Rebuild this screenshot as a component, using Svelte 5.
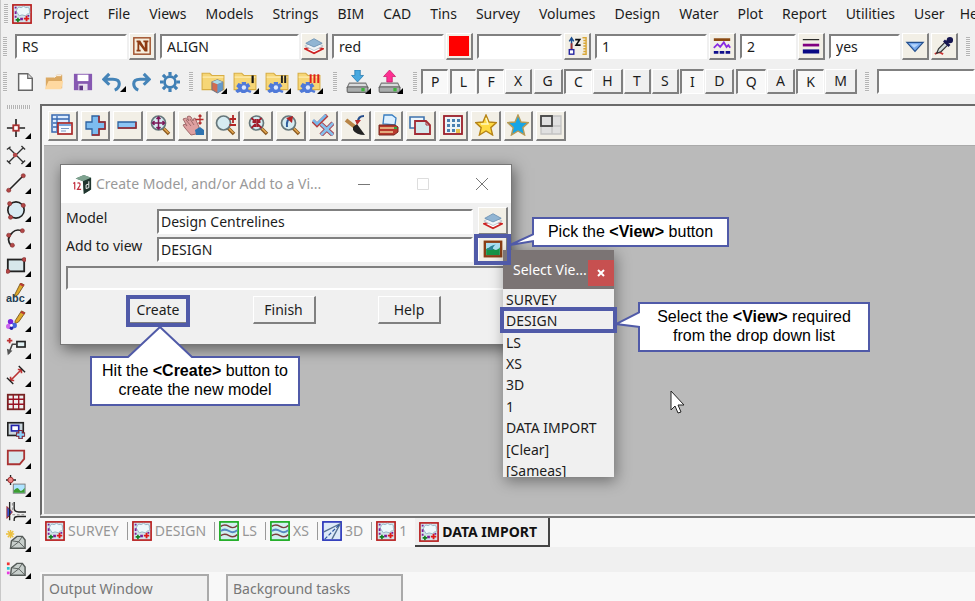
<script lang="ts">
type Tool = { name: string; icon: string; menu?: boolean }

const menus = [
	"Project", "File", "Views", "Models", "Strings", "BIM", "CAD", "Tins", "Survey",
	"Volumes", "Design", "Water", "Plot", "Report", "Utilities", "User", "He",
]

const fields = [
	{ name: "Name", value: "RS", width: 112, icon: "name" },
	{ name: "Model", value: "ALIGN", width: 139, icon: "layers" },
	{ name: "Colour", value: "red", width: 112, icon: "colour" },
	{ name: "Height", value: "", width: 85, icon: "height" },
	{ name: "Linestyle", value: "1", width: 112, icon: "linestyle" },
	{ name: "Weight", value: "2", width: 56, icon: "weight" },
	{ name: "Tinable", value: "yes", width: 71, icon: "triangle" },
]

const fileTools: Tool[] = [
	{ name: "New", icon: "page" },
	{ name: "Open", icon: "open" },
	{ name: "Save", icon: "save" },
	{ name: "Undo", icon: "undo", menu: true },
	{ name: "Redo", icon: "redo" },
	{ name: "Settings", icon: "gear" },
]
const folderTools: Tool[] = [
	{ name: "Project folder", icon: "folderCube", menu: true },
	{ name: "Folder one", icon: "folder1", menu: true },
	{ name: "Folder two", icon: "folder2", menu: true },
	{ name: "Folder three", icon: "folder3", menu: true },
]
const driveTools: Tool[] = [
	{ name: "Read", icon: "driveIn", menu: true },
	{ name: "Write", icon: "driveOut", menu: true },
]

const snaps = "PLFXGCHTSIDQAKM".split("")
const snapsOn = ["P", "L", "F", "C", "I", "Q", "K"]

const cadTools = [
	"point", "cross", "line", "circle", "arc", "rect", "text", "paint", "leader",
	"dimension", "grid", "copy", "polygon", "image", "road", "tinNew", "tin",
]

const viewTools = [
	"viewMenu", "plus", "minus", "fit", "pan", "zoomPm", "shrink", "previous",
	"toggle", "brush", "print", "windows", "keypad", "star", "starBlue", "layout",
]

const tabs = [
	{ name: "SURVEY", icon: "plan" },
	{ name: "DESIGN", icon: "plan" },
	{ name: "LS", icon: "section" },
	{ name: "XS", icon: "section" },
	{ name: "3D", icon: "persp" },
	{ name: "1", icon: "plan" },
	{ name: "DATA IMPORT", icon: "plan" },
]
let activeTab = $state("DATA IMPORT")

const views = ["SURVEY", "DESIGN", "LS", "XS", "3D", "1", "DATA IMPORT", "[Clear]", "[Sameas]"]
let model = $state("Design Centrelines")
let view = $state("DESIGN")
let message = $state("")

const folder = `<path d="M1 3h7l2 2h11v13H1z" fill="#f6d676" stroke="#d8ae45"/><path d="M1.500 6.500h19" stroke="#fff0b8"/>`
const cog = `<path d="M8 11h4v2l2-1 2 3-2 1v2l3 1-1 2-3-1-2 1H8l-1-1-3 1-2-2 3-2-2-2 2-3 3 1z" fill="#4f79d8"/><circle cx="10" cy="16" r="2" fill="#dfe8fb"/>`
const drive = `<path d="M4 12h15l2 4H2z" fill="#d9dbdc" stroke="#777"/><rect x="2" y="15.500" width="19" height="5" rx="1" fill="#a9acac" stroke="#666"/><rect x="15" y="16.500" width="3" height="3" fill="#3db53d"/>`
const lens = `<path d="M14 14l6 6" stroke="#8a5a20" stroke-width="3.500"/><path d="M14.500 14l5 5" stroke="#e5a850" stroke-width="1.500"/><circle cx="9.500" cy="9" r="7" fill="#d6ecf2" stroke="#66777b" stroke-width="1.700"/>`
const starPath = `M11 1l3 7 7.500.6-5.700 5 1.800 7.400L11 17l-6.600 4 1.800-7.400-5.700-5L8 8z`
const dot = (x: number, y: number) => `<circle cx="${x}" cy="${y}" r="2.300" fill="#b34747" stroke="#7c2828" stroke-width=".6"/>`
const mesh = `<path d="M5 20l1-8 6-5h6l3 4v9z" fill="#c8cfcc" stroke="#555b58" stroke-width="1.600"/><path d="M5 20l9-7 7 7M14 13l4-6M14 13l-7-1" fill="none" stroke="#555b58"/>`

// every icon is drawn on a 22 x 22 grid
const icons: Record<string, string> = {
	plan: `<rect x="1" y="1" width="20" height="20" fill="#d3e3ea" stroke="#b81c1c" stroke-width="1.800"/><path d="M6 5q1-3 4-1 3-3 5 0 5-1 4 3 2 4-2 4l-2 2-4-1-3 1-2-3q-3-2 0-5z" fill="#edf8fb" stroke="#8fb2c2"/><path d="M3 3h2v2H3zM3 8h2v3H3zM3 13h2v2H3zM9 15h3v3H9zM17 12h2v2h-2z" fill="#7a1e9a"/><path d="M6.500 15v5M4 17.500h5" stroke="#128020" stroke-width="1.800"/><path d="M16 13v6M13 16h6" stroke="#e01818" stroke-width="2"/>`,
	section: `<rect x="1" y="1" width="20" height="20" fill="#d2eff0" stroke="#12a818" stroke-width="1.800"/><path d="M2 6q4-3 9 0t9-1" fill="none" stroke="#7b3e3e" stroke-width="1.600"/><path d="M2 11q4-3 9 0t9-1" fill="none" stroke="#5789c2" stroke-width="2.200"/><path d="M2 16q4-3 9 0t9-1" fill="none" stroke="#7b3e3e" stroke-width="1.600"/>`,
	persp: `<rect x="1" y="1" width="20" height="20" fill="#dce9f8" stroke="#2430b8" stroke-width="1.800"/><path d="M2 12L20 3 11 20" fill="none" stroke="#55708f" stroke-width="1.500"/><path d="M3 20L20 3" stroke="#2b56a0" stroke-width="1.300" stroke-dasharray="4 2"/>`,
	name: `<rect x="2" y="2" width="18" height="18" fill="#f6eedc" stroke="#a0522d" stroke-width="1.600"/><path d="M5 5h4l5 8V7h-1.500V5H18v2h-1v10h-3L8 9v6h1.500v2H5v-2h1V7H5z" fill="#8e3b12"/>`,
	layers: `<path d="M1 14l10 5 10-5-10-3z" fill="#fff" stroke="#c22" stroke-width="1.800"/><path d="M1 11l10 5 10-5-10-5z" fill="#f2f5f7" stroke="#b4c2cc"/><path d="M2 8l9 4 9-4-9-5z" fill="#91b5d3" stroke="#6f94b5"/>`,
	colour: `<rect x="0" y="0" width="22" height="22" fill="#f00"/>`,
	height: `<path d="M5 17V3M2.500 6L5 2l2.500 4" fill="none" stroke="#194d8f" stroke-width="1.600"/><path d="M5 8v8" stroke="#a33030" stroke-width="2"/><rect x="2.500" y="15" width="5" height="5" fill="#fff" stroke="#2222a0" stroke-width="1.500"/><path d="M9 4h5l-4 6h5" fill="none" stroke="#111" stroke-width="1.800"/><path d="M17 2h4v18h-4M18 5h3M18 8h3M18 11h3M18 14h3M18 17h3" fill="none" stroke="#d8a736" stroke-width="1.600"/>`,
	linestyle: `<path d="M2 4h18" stroke="#8b4a12" stroke-width="3"/><path d="M2 13l4-4 3 3 4-5 3 5 2-2 2 3" fill="none" stroke="#8a2be2" stroke-width="2"/><path d="M2 18h18" stroke="#10108c" stroke-width="3" stroke-dasharray="5 1.500"/>`,
	weight: `<path d="M2 4h18" stroke="#222" stroke-width="1.300"/><path d="M2 10h18" stroke="#800080" stroke-width="3"/><path d="M2 17h18" stroke="#0a0a84" stroke-width="4.500"/>`,
	triangle: `<path d="M2 7h18l-9 10z" fill="#77a9ed" stroke="#24508e" stroke-width="1.300"/><path d="M6 9h9l-5 4z" fill="#b8d7fb"/>`,
	dropper: `<path d="M1 20q4-4 9 0" fill="none" stroke="#c33" stroke-width="2"/><path d="M3 19l2-5 7-7 3 3-7 7z" fill="#d2dcdc" stroke="#333" stroke-width="1.300"/><path d="M11 5l6 6M14 7l3-4" stroke="#161650" stroke-width="3"/><circle cx="17.500" cy="4.500" r="3.500" fill="#161650"/>`,
	page: `<path d="M4 2h10l5 5v13H4z" fill="#fff" stroke="#666" stroke-width="1.600"/><path d="M14 2v5h5" fill="#ddd" stroke="#666" stroke-width="1.300"/>`,
	open: `<path d="M2 18V6h9l3-3h6v15z" fill="#dba963"/><path d="M1 19l4-9h16l-2 9z" fill="#ffd9a0"/><path d="M11 6l3-2h5" stroke="#fff" fill="none"/>`,
	save: `<path d="M1 2h20v18H1z" fill="#8658b1"/><rect x="5" y="3" width="12" height="7" fill="#fff"/><rect x="6" y="13" width="10" height="7" fill="#e8e0ee"/><rect x="7" y="15" width="4" height="5" fill="#5e3685"/>`,
	undo: `<path d="M8 2L2 8l6 6M2 8h10q7 0 7 5 0 5-5 7" fill="none" stroke="#4584b8" stroke-width="3.400"/>`,
	redo: `<path d="M14 2l6 6-6 6M20 8H10q-7 0-7 5 0 5 5 7" fill="none" stroke="#4584b8" stroke-width="3.400"/>`,
	gear: `<circle cx="11" cy="11" r="6" fill="none" stroke="#3f7fb5" stroke-width="3"/><path d="M11 0v4M11 18v4M0 11h4M18 11h4M3.200 3.200L6 6M16 16l2.800 2.800M18.800 3.200L16 6M6 16l-2.800 2.800" stroke="#3f7fb5" stroke-width="3.500"/>`,
	folderCube: `${folder}<path d="M10 11l5-2 5 2v7l-5 3-5-3z" fill="#d26b50" stroke="#77777f"/><path d="M10 11l5 2 5-2-5-2z" fill="#aadbea"/><path d="M15 13l5-2v7l-5 3z" fill="#6299cb"/>`,
	folder1: `${folder}${cog}<path d="M18 5v7" stroke="#111" stroke-width="2"/>`,
	folder2: `${folder}${cog}<path d="M15.500 5v7M18.500 5v7" stroke="#222" stroke-width="1.800"/>`,
	folder3: `${folder}${cog}<path d="M12.500 4v8M16 4v8M19.500 4v8" stroke="#e12020" stroke-width="1.800"/>`,
	driveIn: `${drive}<path d="M9 0h5v5h3l-5.500 6L6 5h3z" fill="#48a9e0" stroke="#2377ad" stroke-width=".7"/>`,
	driveOut: `${drive}<path d="M9 11h5V6h3l-5.500-6L6 6h3z" fill="#ff2f92" stroke="#c61b6a" stroke-width=".7"/>`,
	point: `<path d="M11 1v20M1 11h20" stroke="#222" stroke-width="1.800"/><rect x="8" y="8" width="6" height="6" fill="#fff" stroke="#a33" stroke-width="2"/>`,
	cross: `<path d="M3 3l16 16M19 3L3 19M1 5l4-3M17 1l4 4M1 17l4 4M17 21l4-4" stroke="#333" stroke-width="1.500"/><circle cx="10" cy="11" r="2.500" fill="#b34747"/>`,
	line: `<path d="M3 19L19 3" stroke="#222" stroke-width="1.800"/>${dot(3, 19)}${dot(19, 3)}`,
	circle: `<circle cx="11" cy="11" r="9" fill="#d9eaf2" stroke="#222" stroke-width="1.800"/>${dot(4, 4)}${dot(19, 6)}${dot(5, 19)}`,
	arc: `<path d="M6 20Q-1 12 7 5q5-5 12-1" fill="none" stroke="#222" stroke-width="1.800"/>${dot(3, 8)}${dot(18, 3)}${dot(7, 19)}`,
	rect: `<rect x="2" y="5" width="18" height="13" fill="#d7e7eb" stroke="#222" stroke-width="2"/>${dot(20, 5)}${dot(2, 18)}`,
	text: `<path d="M10 12L16 0l4 2-7 11-4 2z" fill="#dfaa2b" stroke="#79571b"/><path d="M16 0l4 2-1 2-4-2z" fill="#b73939"/><text x="0" y="21" font-family="Liberation Sans" font-size="12" font-weight="bold" fill="#243f55">abc</text>`,
	paint: `<path d="M10 12L17 1l4 2-7 10-4 2z" fill="#dfaa2b" stroke="#79571b"/><path d="M17 1l4 2-1 2-4-2z" fill="#b73939"/><circle cx="5" cy="13" r="3" fill="#72d"/><circle cx="9" cy="17" r="3" fill="#46d"/><circle cx="3" cy="18" r="3" fill="#c6e"/><circle cx="6" cy="20" r="2" fill="#22a"/><circle cx="6" cy="17" r="1.500" fill="#fff"/>`,
	leader: `<path d="M4 1v6M1 4h6" stroke="#b33" stroke-width="2"/><rect x="12" y="5" width="9" height="6" fill="#e1f1f4" stroke="#222" stroke-width="1.800"/><path d="M12 8H7L3 18" fill="none" stroke="#444" stroke-width="1.600"/><path d="M1 13l1 7 5-5z" fill="#555"/>`,
	dimension: `<path d="M5 17L17 5M5 13v4h4M13 5h4v4" fill="none" stroke="#b33" stroke-width="1.800"/><path d="M1 14l7 7M14 1l7 7" stroke="#222" stroke-width="1.500"/>`,
	grid: `<rect x="2" y="3" width="18" height="16" fill="#eee" stroke="#722" stroke-width="2"/><path d="M2 8h18M2 13.500h18M8 3v16M14 3v16" stroke="#912" stroke-width="1.500"/>`,
	copy: `<rect x="2" y="3" width="17" height="14" fill="#cbd6dc" stroke="#222" stroke-width="1.800"/><rect x="6" y="6" width="8" height="6" fill="#fff" stroke="#22a" stroke-width="1.800"/><path d="M16 11v10M11 16h10" stroke="#7d2332" stroke-width="5"/><path d="M16 12v8M12 16h8" stroke="#8bd3ff" stroke-width="2.500"/>`,
	polygon: `<path d="M2 4h18v9l-5 6H2z" fill="#d8e9ec" stroke="#a33" stroke-width="2"/>`,
	image: `<path d="M5 0v11M0 5.500h11" stroke="#222" stroke-width="1.500"/><circle cx="5" cy="5.500" r="3" fill="#e88" stroke="#922"/><rect x="8" y="10" width="13" height="10" fill="#aee4ff" stroke="#777"/><path d="M8.500 17q4-5 6-1t6-2v5.500h-12z" fill="#3e9d31"/>`,
	road: `<path d="M1 5l6 6-6 7z" fill="#3158dc" stroke="#a22"/><path d="M4 0v20M9 0v7q0 4 5 4h8M9 21v-2q0-3 4-3h9" fill="none" stroke="#222" stroke-width="1.500"/><path d="M7 14h15M7 1v8" stroke="#888" stroke-dasharray="3 2"/>`,
	tinNew: `${mesh}<path d="M5 0v9M0 4.500h9M2 1l6 7M8 1L2 8" stroke="#ebc03f" stroke-width="1.600"/>`,
	tin: `${mesh}<path d="M1 6h3v3H1z" fill="#e33"/><path d="M1 11h3v3H1z" fill="#26c6d0"/><path d="M1 16h3v3H1z" fill="#e83be0"/>`,
	viewMenu: `<rect x="1" y="1" width="17" height="17" fill="#dcecff" stroke="#3768b0" stroke-width="1.500"/><path d="M1 5h17M6 2v15M2 9h7M2 13h6" stroke="#3768b0" stroke-width="1.300"/><rect x="7" y="9" width="14" height="11" fill="#f6fbff" stroke="#a82828" stroke-width="1.700"/><path d="M8 11h12" stroke="#7aa7dc" stroke-width="2"/><path d="M10 14.500h8M10 17h5" stroke="#7a99c5"/>`,
	plus: `<path d="M8 2h7v6h6v7h-6v6H8v-6H2V8h6z" fill="#7dbcf0" stroke="#2d62a0" stroke-width="1.300"/><path d="M15 2v6h6v7h-6v6H8" fill="none" stroke="#a42828" stroke-width="1.500"/>`,
	minus: `<path d="M2 8h18v6H2z" fill="#8cc5f4" stroke="#2d62a0" stroke-width="1.300"/><path d="M20 8v6H2" fill="none" stroke="#a42828" stroke-width="1.500"/>`,
	fit: `${lens}<path d="M9.500 3v12M3.500 9h12M7.500 5l2-2 2 2M7.500 13l2 2 2-2M5.500 7l-2 2 2 2M13.500 7l2 2-2 2" fill="none" stroke="#7c1758" stroke-width="1.500"/>`,
	pan: `<path d="M1 5q3-2 5 1l1 1-2-4q2-2 4 0l2 4q0-3 2-3l4 9-3 7-5 1-6-7-2-3q2-2 4 1z" fill="#dfa0a0" stroke="#a06a6a"/><path d="M4 6l5 6M8 5l4 6" stroke="#a06a6a"/><path d="M13 16l5-3 4 3v5h-8z" fill="#2f73af"/><path d="M18 1v9M13.500 5.500h8M16.500 2.500L18 1l1.500 1.500M16.500 8.500L18 10l1.500-1.500" fill="none" stroke="#b32e2e" stroke-width="1.300"/>`,
	zoomPm: `${lens}<path d="M19 1v8M15.500 5h6.500M15.500 11H22" stroke="#b22424" stroke-width="1.800"/>`,
	shrink: `${lens}<path d="M4.500 4l4 4V5M8.500 8h-3M14.500 4l-4 4V5M10.500 8h3M4.500 14l4-4v3M14.500 14l-4-4v3" fill="none" stroke="#a11c2b" stroke-width="1.800"/>`,
	previous: `${lens}<path d="M13 3q-6 2-5 10" fill="none" stroke="#2e5e9d" stroke-width="2"/><path d="M7 4l7-2-1 7z" fill="#b42323"/>`,
	toggle: `<path d="M1 7l4 4L15 1" fill="none" stroke="#b43c3c" stroke-width="4"/><path d="M1 6l4 4L14 1" fill="none" stroke="#78b6e8" stroke-width="2.500"/><path d="M9 10l12 11M21 9L9 21" stroke="#a83c4c" stroke-width="4.500"/><path d="M9 10l12 11M21 9L9 21" stroke="#86c0ec" stroke-width="2.800"/>`,
	brush: `<path d="M2 6l9 7" stroke="#b88547" stroke-width="4"/><path d="M9 13l4-3 8 11q-9 0-12-5z" fill="#222"/><path d="M20 2q-6 0-6 6" fill="none" stroke="#284f8b" stroke-width="2.200"/><path d="M11 6h6l-4 5z" fill="#b52b2b"/>`,
	print: `<path d="M6 10L7 1h8l4 3-1 7z" fill="#dcf0ff" stroke="#377cc0" stroke-width="1.300"/><path d="M2 11h16l3 2v5l-4 3H2z" fill="#b8392c" stroke="#76271f"/><path d="M3 14h15M3 18h13" stroke="#f0d097" stroke-width="1.500"/><path d="M17 14h3" stroke="#35a83e" stroke-width="2"/>`,
	windows: `<path d="M1 3h14v11H1z" fill="#edf7fc" stroke="#3f73ad" stroke-width="1.600"/><path d="M6 7h11l4 4v9H6z" fill="#d5e8ec" stroke="#a22b35" stroke-width="1.800"/><path d="M17 7v4h4" fill="none" stroke="#a22b35"/>`,
	keypad: `<rect x="2" y="2" width="18" height="18" fill="#eef4f6" stroke="#9b1d28" stroke-width="1.800"/><path d="M5 5h3v3H5zM10 5h3v3h-3zM15 5h3v3h-3zM5 10h3v3H5zM10 10h3v3h-3zM15 10h3v3h-3zM5 15h3v3H5zM10 15h3v3h-3z" fill="#4b80af"/><rect x="14" y="15" width="4" height="4" fill="#e7c14c"/>`,
	star: `<path d="${starPath}" fill="#ffda42" stroke="#b68316" stroke-width="1.400"/><path d="M11 4l2 6-7 0" fill="none" stroke="#fff7bd" stroke-width="1.500"/>`,
	starBlue: `<path d="${starPath}" fill="#16a5e5" stroke="#b79a54" stroke-width="1.400"/>`,
	layout: `<path d="M1 2h20v18H1zM12 2v18M1 12h20" fill="#e0e0e0" stroke="#c2c2c2" stroke-width="1.300"/><rect x="1" y="2" width="11" height="10" fill="#e0e0e0" stroke="#444" stroke-width="1.800"/>`,
	picture: `<rect x="2" y="3" width="18" height="16" fill="#a9dff2" stroke="#8a3d15" stroke-width="2.600"/><path d="M3.500 11q4-3 8 0t7-2v8.500h-15z" fill="#159447"/><path d="M4 12q4-5 10-6-4 3-3 6z" fill="#2c8295"/>`,
	app: `<path d="M4 5l9-4 8 3v13l-8 5-1-14z" fill="#527767"/><path d="M4 5l9-4 8 3-8 4z" fill="#7fa390"/><path d="M12 8l9-4v13l-8 5z" fill="#20352e"/><path d="M3 9v8M1.500 10.500L3 9M6 10q4-1 2.500 3L6 17h4" fill="none" stroke="#c22e3e" stroke-width="1.300"/><path d="M18.500 8v7l-3 1v-4l3-1" fill="none" stroke="#fff"/>`,
}
</script>

{#snippet glyph(name: string)}
	<svg class="glyph" viewBox="0 0 22 22" aria-hidden="true">{@html icons[name]}</svg>
{/snippet}

{#snippet flat(tool: Tool)}
	<button class="flat" class:menu={tool.menu} aria-label={tool.name}>
		{@render glyph(tool.icon)}
	</button>
{/snippet}

<div class="app">
	<nav class="menubar">
		<span class="grip"></span>
		<span class="logo">{@render glyph("plan")}</span>
		{#each menus as menu}
			<button class="menu-item">{menu}</button>
		{/each}
	</nav>

	<div class="bar">
		<span class="grip"></span>
		{#each fields as field}
			<div class="field">
				<input class="sunken" aria-label={field.name} value={field.value} style="width: {field.width}px" />
				<button class="raised" aria-label="Pick {field.name}">{@render glyph(field.icon)}</button>
				{#if field.name === "Tinable"}
					<button class="raised" aria-label="Same as">{@render glyph("dropper")}</button>
				{/if}
			</div>
		{/each}
		<span class="grip last"></span>
	</div>

	<div class="bar tools">
		<span class="grip"></span>
		<div class="group files">
			{#each fileTools as tool}{@render flat(tool)}{/each}
		</div>
		<span class="grip"></span>
		<div class="group wide">
			{#each folderTools as tool}{@render flat(tool)}{/each}
		</div>
		<span class="grip"></span>
		<div class="group wide">
			{#each driveTools as tool}{@render flat(tool)}{/each}
		</div>
		<span class="grip"></span>
		<div class="snaps">
			{#each snaps as snap}
				<button class="snap" class:on={snapsOn.includes(snap)}>{snap}</button>
			{/each}
		</div>
		<span class="grip"></span>
		<input class="sunken command" aria-label="Command" />
	</div>

	<div class="work">
		<aside class="sidebar">
			<span class="grip across"></span>
			{#each cadTools as tool}
				<button class="flat menu" aria-label={tool}>{@render glyph(tool)}</button>
			{/each}
		</aside>

		<main>
			<section class="frame">
				<div class="view-tools">
					{#each viewTools as tool}
						<button class="raised" aria-label={tool}>{@render glyph(tool)}</button>
					{/each}
				</div>

				<div class="canvas">
					<form class="dialog" onsubmit={e => e.preventDefault()}>
						<header>
							<span class="app-icon">{@render glyph("app")}</span>
							<h1>Create Model, and/or Add to a Vi...</h1>
							<button type="button" aria-label="Minimise">
								<svg viewBox="0 0 12 12"><path d="M0 6.500h12" /></svg>
							</button>
							<button type="button" aria-label="Maximise" disabled>
								<svg viewBox="0 0 12 12"><path d="M.5.5h11v11H.5z" /></svg>
							</button>
							<button type="button" aria-label="Close">
								<svg viewBox="0 0 12 12"><path d="M0 0l12 12M12 0L0 12" /></svg>
							</button>
						</header>
						<div class="row">
							<label for="model">Model</label>
							<input id="model" class="sunken" bind:value={model} />
							<button type="button" class="raised" aria-label="Pick model">{@render glyph("layers")}</button>
						</div>
						<div class="row">
							<label for="view">Add to view</label>
							<input id="view" class="sunken" bind:value={view} />
							<button type="button" class="raised" aria-label="Pick view">{@render glyph("picture")}</button>
						</div>
						<input class="message" aria-label="Message" readonly bind:value={message} />
						<footer>
							<button type="submit">Create</button>
							<button type="button">Finish</button>
							<button type="button">Help</button>
						</footer>
					</form>

					<div class="popup">
						<header>
							<h2>Select Vie...</h2>
							<button aria-label="Close list">
								<svg viewBox="0 0 8 8"><path d="M1 1l6 6M7 1L1 7" /></svg>
							</button>
						</header>
						<ul>
							{#each views as name}
								<li><button onclick={() => (view = name)}>{name}</button></li>
							{/each}
						</ul>
					</div>

					<span class="mark mark-create"></span>
					<span class="mark mark-view"></span>
					<span class="mark mark-design"></span>

					<div class="callout pick">
						<svg viewBox="0 0 25 16"><path d="M25 3L1 14l24-4" /></svg>
						<p>Pick the <b>&lt;View&gt;</b> button</p>
					</div>
					<div class="callout select">
						<svg viewBox="0 0 25 18"><path d="M25 1L1 13l24 3" /></svg>
						<p>Select the <b>&lt;View&gt;</b> required<br />from the drop down list</p>
					</div>
					<div class="callout create">
						<svg viewBox="0 0 68 32"><path d="M1 32L34 1l33 31" /></svg>
						<p>Hit the <b>&lt;Create&gt;</b> button to<br />create the new model</p>
					</div>

					<svg class="pointer" viewBox="0 0 15 24" aria-hidden="true">
						<path d="M1 1v19l4-4 3 7 3-1-3-7h6z" />
					</svg>
				</div>
			</section>

			<nav class="tabs">
				{#each tabs as tab}
					<button class:active={activeTab === tab.name} onclick={() => (activeTab = tab.name)}>
						{@render glyph(tab.icon)}
						<span>{tab.name}</span>
					</button>
				{/each}
			</nav>

			<div class="docks">
				<div class="dock">Output Window</div>
				<div class="dock">Background tasks</div>
			</div>
		</main>
	</div>
</div>

<style>
:global(body) {
	margin: 0;
	background: #f0f0f0;
}

.app {
	--dark: #808080;
	--mark: #505aa8;
	display: flex;
	flex-direction: column;
	box-sizing: border-box;
	height: 100vh;
	overflow: hidden;
	border-left: 1px solid #c8c8c8;
	background: #f0f0f0;
	color: #1c1c1c;
	font-family: "Noto Sans", "Segoe UI", sans-serif;
	font-size: 14px;
	line-height: 20px;
}

.app :global(*) {
	box-sizing: border-box;
}

button,
input {
	margin: 0;
	padding: 0;
	border: 0;
	border-radius: 0;
	background: none;
	color: inherit;
	font: inherit;
}

.glyph {
	display: block;
	flex: none;
	width: 20px;
	height: 20px;
}

.grip {
	flex: none;
	width: 4px;
	height: 20px;
	background: repeating-linear-gradient(#b4b4b4 0 1px, #f4f4f4 1px 2px);
}

.menubar {
	display: flex;
	flex: none;
	align-items: center;
	gap: 1px;
	height: 28px;
	padding-left: 3px;
}

.logo {
	margin: 0 1px 0 3px;
}

.menu-item {
	flex: none;
	padding: 0 9px;
}

.menu-item:last-child {
	padding: 0 0 0 5px;
}

.bar {
	display: flex;
	flex: none;
	align-items: center;
	gap: 4px;
	height: 37px;
	padding-left: 2px;
}

.bar > .grip:first-child {
	margin-right: 4px;
}

.grip.last {
	margin-left: 4px;
}

.field {
	display: flex;
	flex: none;
	align-items: center;
	gap: 2px;
}

.sunken {
	height: 25px;
	padding: 0 5px;
	border: 2px solid #fff;
	border-top-color: var(--dark);
	border-left-color: var(--dark);
	background: #fff;
}

.raised {
	display: flex;
	align-items: center;
	justify-content: center;
	flex: none;
	width: 27px;
	height: 27px;
	border: 1px solid #fff;
	border-right: 2px solid var(--dark);
	border-bottom: 2px solid var(--dark);
	background: #f2efe6;
}

.tools {
	height: 33px;
}

.flat {
	position: relative;
	display: flex;
	flex: none;
	align-items: center;
	width: 32px;
	height: 28px;
}

.flat.menu::after {
	content: "";
	position: absolute;
	right: 5px;
	bottom: 4px;
	border: 3px solid #000;
	border-top-color: transparent;
	border-left-color: transparent;
}

.group {
	display: flex;
	flex: none;
}

.files {
	width: 170px;
}

.files .flat {
	width: 29px;
}

.wide {
	margin-left: 4px;
}

.wide .glyph {
	width: 24px;
	height: 24px;
}

.wide .flat.menu::after {
	right: 6px;
	bottom: 2px;
}

.snaps {
	display: flex;
	flex: none;
	justify-content: space-between;
	width: 436px;
	margin-right: 4px;
}

.snap {
	height: 25px;
	padding: 0 8px;
	border: 1px solid #fff;
	border-right: 2px solid var(--dark);
	border-bottom: 2px solid var(--dark);
}

.snap.on {
	border: 1px solid #fff;
	border-top: 2px solid var(--dark);
	border-left: 2px solid var(--dark);
	background: #f8f8f8;
}

.command {
	flex: 1;
	min-width: 0;
	margin-left: 4px;
}

.work {
	display: flex;
	flex: 1;
	min-height: 0;
	padding-top: 6px;
}

.sidebar {
	display: flex;
	flex: none;
	flex-direction: column;
	width: 39px;
	padding: 0 0 20px 5px;
}

.sidebar .flat {
	flex: 1;
	min-height: 0;
}

.sidebar .flat.menu::after {
	right: 7px;
	bottom: 2px;
}

.grip.across {
	width: 24px;
	height: 4px;
	margin: 1px 0 5px 1px;
	background: repeating-linear-gradient(90deg, #b4b4b4 0 1px, #f4f4f4 1px 2px);
}

main {
	display: flex;
	flex: 1;
	flex-direction: column;
	min-width: 0;
}

.frame {
	display: flex;
	flex: 1;
	flex-direction: column;
	border-top: 2px solid #6a6a6a;
	border-left: 2px solid #6a6a6a;
	border-bottom: 2px solid #f0f0f0;
	background: #f6f6f6;
}

.view-tools {
	display: grid;
	grid-template-columns: repeat(16, 1fr);
	gap: 3px;
	align-items: center;
	width: 530px;
	height: 39px;
	padding: 0 6px;
}

.view-tools .raised {
	width: auto;
	height: 30px;
}

.view-tools .glyph {
	width: 22px;
	height: 22px;
}

.canvas {
	position: relative;
	flex: 1;
	margin-left: 2px;
	border-top: 1px solid #aaa;
	background: #bababa;
}

.dialog {
	position: absolute;
	top: 18px;
	left: 16px;
	width: 452px;
	padding-bottom: 20px;
	border: 1px solid #777;
	background: #f0f0f0;
	box-shadow: 2px 4px 14px rgba(0, 0, 0, 0.5);
}

.dialog header {
	display: flex;
	align-items: center;
	height: 38px;
	margin-bottom: 4px;
	padding-left: 11px;
	background: #fff;
}

.dialog h1 {
	flex: 1;
	min-width: 0;
	margin: 0 0 0 4px;
	color: #999;
	font-size: 14px;
	font-weight: 400;
	white-space: nowrap;
}

.dialog header button {
	display: flex;
	flex: none;
	align-items: center;
	justify-content: center;
	width: 59px;
	height: 36px;
}

.dialog header button svg {
	width: 12px;
	height: 12px;
	fill: none;
	stroke: #777;
}

.dialog header button:disabled svg {
	stroke: #ddd;
}

.row {
	display: grid;
	grid-template-columns: 86px 1fr 30px;
	gap: 5px;
	align-items: center;
	height: 28px;
	padding: 0 3px 0 5px;
}

.row label {
	padding-bottom: 6px;
}

.row .sunken {
	min-width: 0;
	padding: 0 2px;
}

.row .raised {
	width: 30px;
	height: 28px;
}

.message {
	display: block;
	width: calc(100% - 10px);
	height: 24px;
	margin: 3px 5px 6px;
	border: 2px solid #fff;
	border-top-color: var(--dark);
	border-left-color: var(--dark);
}

.dialog footer {
	display: flex;
	justify-content: space-between;
	padding: 0 70px 0 66px;
}

.dialog footer button {
	width: 63px;
	height: 28px;
	border: 1px solid #fff;
	border-right: 2px solid var(--dark);
	border-bottom: 2px solid var(--dark);
}

.popup {
	position: absolute;
	top: 104px;
	left: 459px;
	width: 111px;
	height: 227px;
	overflow: hidden;
	background: #f0f0f0;
	box-shadow: 2px 4px 14px rgba(0, 0, 0, 0.4);
}

.popup header {
	display: flex;
	align-items: center;
	justify-content: space-between;
	height: 39px;
	padding-left: 10px;
	background: #7b7474;
	color: #fff;
}

.popup h2 {
	margin: 0;
	font-size: 14px;
	font-weight: 400;
	white-space: nowrap;
}

.popup header button {
	display: flex;
	align-items: center;
	justify-content: center;
	align-self: flex-end;
	width: 26px;
	height: 26px;
	margin-bottom: 3px;
	background: #c75050;
}

.popup header svg {
	width: 8px;
	height: 8px;
	stroke: #fff;
	stroke-width: 2;
}

.popup ul {
	display: grid;
	grid-auto-rows: 1fr;
	height: 193px;
	margin: 0;
	padding: 0;
	list-style: none;
}

.popup li {
	display: flex;
}

.popup li button {
	flex: 1;
	padding-left: 3px;
	text-align: left;
	white-space: nowrap;
}

.mark {
	position: absolute;
	border: 4px solid var(--mark);
	pointer-events: none;
}

.mark-create {
	top: 149px;
	left: 82px;
	width: 64px;
	height: 32px;
}

.mark-view {
	top: 88px;
	left: 430px;
	width: 37px;
	height: 31px;
}

.mark-design {
	top: 161px;
	left: 456px;
	width: 117px;
	height: 26px;
}

.callout {
	position: absolute;
	display: flex;
	align-items: center;
	justify-content: center;
	padding-bottom: 2px;
	border: 2px solid var(--mark);
	background: #fff;
	color: #000;
	font-family: "Liberation Sans", Arial, sans-serif;
	font-size: 16px;
	line-height: 19px;
	text-align: center;
	white-space: nowrap;
}

.callout p {
	margin: 0;
}

.callout svg {
	position: absolute;
	fill: #fff;
	stroke: var(--mark);
	stroke-width: 2;
}

.pick {
	top: 71px;
	left: 488px;
	width: 197px;
	height: 30px;
}

.pick svg {
	top: 12px;
	left: -25px;
	width: 25px;
	height: 16px;
}

.select {
	top: 156px;
	left: 594px;
	width: 232px;
	height: 50px;
}

.select svg {
	top: 7px;
	left: -25px;
	width: 25px;
	height: 18px;
}

.create {
	top: 210px;
	left: 46px;
	width: 210px;
	height: 50px;
}

.create svg {
	top: -32px;
	left: 34px;
	width: 68px;
	height: 32px;
}

.pointer {
	position: absolute;
	top: 244px;
	left: 626px;
	width: 15px;
	height: 24px;
	fill: #fff;
	stroke: #222;
}

.tabs {
	display: flex;
	flex: none;
	height: 31px;
	border-top: 2px solid #777;
	background: #f8f8f8;
}

.tabs button {
	display: flex;
	align-items: center;
	gap: 3px;
	height: 26px;
	padding: 0 8px 0 5px;
	color: #969696;
	white-space: nowrap;
}

.tabs button:not(.active) + button:not(.active) {
	background: linear-gradient(#999, #999) left center / 1px 18px no-repeat;
}

.tabs .active {
	height: 29px;
	padding: 0 11px 0 4px;
	border: solid #444;
	border-width: 0 2px 2px 0;
	background: #f0f0f0;
	color: #111;
	font-weight: 700;
}

.docks {
	display: flex;
	flex: none;
	gap: 17px;
	height: 54px;
	padding: 27px 0 0 2px;
	background: linear-gradient(#f0f0f0 25px, #f8f8f8 25px);
}

.dock {
	width: 167px;
	padding: 3px 5px;
	border: 2px solid #aaa;
	border-bottom: 0;
	background: #f0f0f0;
	color: #777;
}

.dock + .dock {
	width: 177px;
}
</style>
